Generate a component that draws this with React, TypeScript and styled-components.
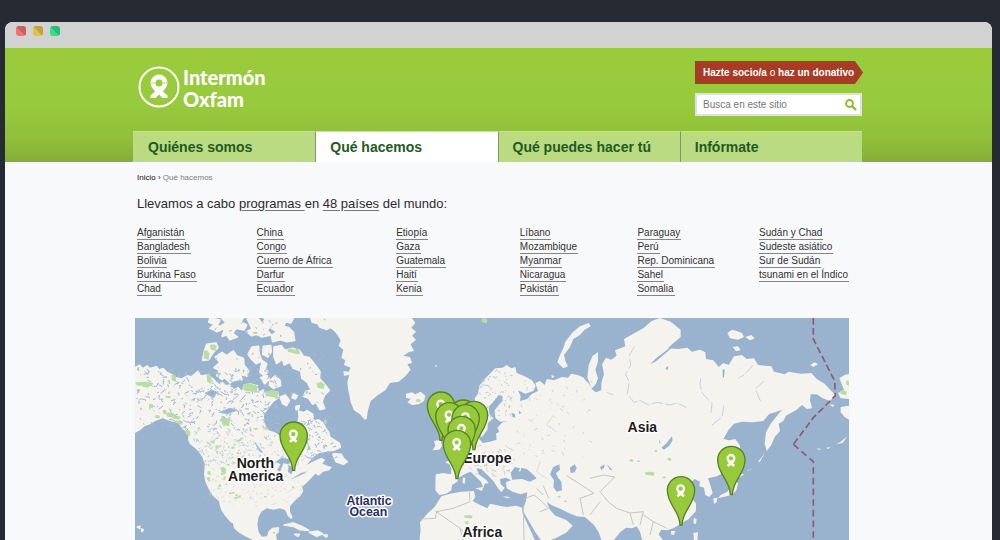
import React from 'react';
import styled, { createGlobalStyle } from 'styled-components';

const GlobalStyle = createGlobalStyle`
  * { box-sizing: border-box; }
  body {
    margin: 0;
    background: #252a33;
    font-family: 'Liberation Sans', Arial, sans-serif;
    color: #333;
  }
`;

const Page = styled.div`
  height: 100vh;
  overflow: hidden;
  padding: 22px 8px 0 5px;
`;

const BrowserWindow = styled.div`
  min-height: 100%;
  background: #f8f9fb;
  border-radius: 8px 8px 0 0;
  overflow: hidden;
`;

const TitleBar = styled.div`
  display: flex;
  gap: 7px;
  height: 26px;
  padding: 4px 11px;
  background: #d2d2d2;
`;

const WindowDot = styled.span<{ $light: string; $dark: string }>`
  width: 10px;
  height: 10px;
  border-radius: 3px;
  background: linear-gradient(45deg, ${(p) => p.$light} 50%, ${(p) => p.$dark} 50%);
`;

const Header = styled.header`
  background: linear-gradient(#99cb3d 0%, #98ca3d 50%, #90bf3a 80%, #84ae36 100%);
`;

const Container = styled.div`
  max-width: 731px;
  margin: 0 auto;
`;

const Masthead = styled.div`
  display: flex;
  justify-content: space-between;
  height: 83px;
  padding: 13px 1px 0 0;
`;

const Logo = styled.a`
  display: flex;
  gap: 3px;
  height: 50px;
  padding: 5px 0 0 5px;
  color: #fff;
  text-decoration: none;
`;

const LogoText = styled.span`
  font: 900 20px/22px Lato, sans-serif;
`;

const Tools = styled.div`
  display: flex;
  flex-direction: column;
  gap: 9px;
  width: 168px;
`;

const DonateButton = styled.button`
  height: 23px;
  padding: 0 8px;
  border: 0;
  background: #a63c26;
  clip-path: polygon(0 0, 160px 0, 100% 50%, 160px 100%, 0 100%);
  color: #fff;
  font: bold 10px 'Liberation Sans', Arial, sans-serif;
  text-align: left;
  white-space: nowrap;
`;

const Or = styled.span`
  font-weight: normal;
`;

const SearchForm = styled.form`
  display: flex;
  align-items: center;
  height: 23px;
  margin-right: 1px;
  border: 2px solid #dedfe8;
  background: #fff;
`;

const SearchInput = styled.input`
  flex: 1;
  min-width: 0;
  padding: 0 6px;
  border: 0;
  outline: 0;
  background: none;
  font: 10px 'Liberation Sans', Arial, sans-serif;
  &::placeholder { color: #777; opacity: 1; }
`;

const SearchButton = styled.button`
  display: flex;
  padding: 0 3px;
  border: 0;
  background: none;
`;

const Nav = styled.nav`
  display: grid;
  grid-template-columns: repeat(4, 1fr);
  height: 31px;
  margin-right: 2px;
`;

const Tab = styled.a<{ $active?: boolean }>`
  padding-left: 15px;
  background: ${(p) => (p.$active ? '#fff' : '#bbdb83')};
  border-top: 1px solid #c8e298;
  color: #1f5a1e;
  font-size: 14px;
  font-weight: bold;
  line-height: 30px;
  text-decoration: none;
  &:not(:first-child) {
    padding-left: 14px;
    border-left: 1px solid #7d9a62;
  }
`;

const Main = styled.main`
  padding: 11px 15px 0 2px;
`;

const Breadcrumb = styled.nav`
  padding-left: 2px;
  color: #808080;
  font-size: 8px;
  line-height: 10px;
`;

const HomeLink = styled.a`
  color: #111;
  text-decoration: none;
`;

const Separator = styled.span`
  color: #111;
`;

const Intro = styled.h1`
  margin: 13px 0 15px;
  padding-left: 2px;
  color: #2b2b2b;
  font-size: 13px;
  font-weight: normal;
  line-height: 16px;
`;

const InlineLink = styled.a`
  color: inherit;
  text-decoration: underline;
  text-decoration-color: #777;
  text-underline-offset: 2px;
  white-space: pre;
`;

const Countries = styled.div`
  display: grid;
  grid-template-columns: 120fr 140fr 124fr 118fr 122fr 88fr;
  padding-left: 2px;
`;

const CountryList = styled.ul`
  margin: 0;
  padding: 0;
  list-style: none;
`;

const CountryItem = styled.li`
  display: flex;
  height: 14px;
`;

const CountryLink = styled.a`
  height: 13px;
  padding-right: 1px;
  border-bottom: 1px solid #858585;
  color: #333;
  font-size: 10px;
  line-height: 12px;
  text-decoration: none;
  white-space: nowrap;
`;

const MapPanel = styled.section`
  margin-top: 21px;
`;

const MapSvg = styled.svg`
  display: block;
  width: 100%;
  background: #99b3cf;
`;

const Label = styled.text<{ $sea?: boolean }>`
  font: bold ${(p) => (p.$sea ? 37 : 42)}px 'Liberation Sans', Arial, sans-serif;
  text-anchor: middle;
  fill: ${(p) => (p.$sea ? '#2a2f62' : '#1c1c1c')};
  stroke: #fff;
  stroke-width: 9px;
  stroke-linejoin: round;
  paint-order: stroke;
`;

const tabs = ['Quiénes somos', 'Qué hacemos', 'Qué puedes hacer tú', 'Infórmate'];

const countries = [
  ['Afganistán', 'Bangladesh', 'Bolivia', 'Burkina Faso', 'Chad'],
  ['China', 'Congo', 'Cuerno de África', 'Darfur', 'Ecuador'],
  ['Etiopía', 'Gaza', 'Guatemala', 'Haití', 'Kenia'],
  ['Líbano', 'Mozambique', 'Myanmar', 'Nicaragua', 'Pakistán'],
  ['Paraguay', 'Perú', 'Rep. Dominicana', 'Sahel', 'Somalia'],
  ['Sudán y Chad', 'Sudeste asiático', 'Sur de Sudán', 'tsunami en el Índico'],
];

const northAmerica =
  'M0 165L15 155 30 148 38 158 52 150 60 158 80 152 88 162 100 158 112 170 125 176 138 186 155 190 170 180 185 182 205 165 212 180 235 178 250 190 265 205 278 200 288 210 300 208 312 222 325 215 336 228 340 208 362 205 384 210 386 230 400 222 410 234 425 226 445 230 448 248 430 262 417 278 402 300 403 322 414 345 435 352 455 366 470 400 480 420 498 400 510 370 508 345 500 328 505 306 503 285 520 290 532 284 550 296 553 316 566 312 580 322 590 340 598 350 602 365 616 374 630 383 634 398 612 408 590 410 568 414 548 428 530 450 552 438 574 428 586 434 577 446 592 452 606 456 598 466 580 470 566 482 556 476 545 488 532 502 516 516 520 528 512 542 496 556 480 574 480 590 488 606 483 613 473 602 466 586 450 580 430 584 410 580 394 590 386 606 382 628 386 652 396 665 411 664 416 648 427 638 448 636 446 652 438 660 442 680 380 680 345 664 325 652 312 640 308 622 296 604 280 580 266 558 248 542 236 522 226 500 222 478 224 450 218 428 206 410 196 400 180 388 174 374 176 358 158 342 144 324 120 318 98 310 76 318 60 328 44 334 30 346 0 362Z';

const arcticIslands = [
  'M240 9L270 15 262 30 278 42 262 50 240 40 252 28 236 22Z',
  'M275 9L340 9 332 20 350 30 342 45 318 40 308 55 322 66 300 74 290 60 276 64 283 45 270 34 288 24Z',
  'M352 12L384 9 395 25 408 12 425 30 412 45 424 60 396 66 380 58 364 62 350 50 366 42Z',
  'M402 9L490 9 482 24 468 20 460 34 476 38 490 52 494 76 470 80 452 74 428 80 424 62 440 50 424 40 436 26 412 22Z',
  'M230 88L258 84 264 98 250 112 236 134 218 136 222 112Z',
  'M256 126L276 112 290 122 310 108 320 122 340 130 342 150 356 168 350 184 332 178 336 194 312 196 300 204 284 188 276 194 260 182 268 166 252 158 270 142Z',
  'M366 96L386 94 388 118 396 138 378 146 364 132 354 118Z',
  'M400 94L422 92 424 110 414 126 398 118Z',
  'M396 136L410 146 406 160 414 170 402 182 390 172Z',
  'M392 188L412 182 420 196 404 206Z',
  'M420 196L436 182 450 196 452 212 430 220 418 210Z',
  'M432 96L454 92 464 106 486 100 508 106 520 124 538 128 556 150 570 170 568 190 584 208 598 226 584 240 576 260 584 280 570 284 558 262 548 268 536 250 520 244 528 228 544 226 532 202 516 190 512 168 490 160 480 142 462 150 458 132 440 146 432 126Z',
  'M450 246L466 240 478 256 470 272 458 266Z',
  'M490 236L502 242 496 252 486 248Z',
  'M498 274L508 272 506 282 498 284Z',
  'M608 416L634 418 640 430 652 440 640 448 618 440Z',
  'M270 564L286 576 300 604 314 624 304 620 288 602 276 584Z',
  'M462 630L490 624 514 634 536 646 510 644 490 634Z',
  'M538 652L562 648 578 656 560 664Z',
  'M494 658L508 658 504 664Z',
  'M580 660L592 660 590 666Z',
  'M22 636L30 634 28 640ZM34 642L40 644 36 650Z',
];

const greenland =
  'M540 9L545 24 562 28 568 38 590 46 602 40 618 54 632 76 626 92 640 104 634 128 646 136 642 150 662 158 656 170 640 168 642 182 658 180 652 200 654 222 658 240 662 262 672 286 690 298 704 314 710 312 714 286 722 258 744 240 766 226 780 204 806 200 826 184 842 164 832 148 846 144 840 126 820 122 836 112 852 108 842 88 858 74 846 62 858 50 844 38 856 24 846 9Z';

const eurasia =
  'M257 478L280 474 303 478 304 462 300 450 286 442 302 434 320 418 344 400 366 392 376 380 374 362 386 358 388 372 398 384 420 380 440 374 438 356 448 350 442 338 458 322 474 318 450 320 436 308 434 286 446 270 458 258 456 242 446 240 434 256 416 276 418 296 430 310 414 324 412 344 396 366 386 362 376 336 372 300 376 270 374 250 384 236 388 212 406 190 422 174 436 160 458 158 470 150 484 160 496 156 500 174 524 184 546 196 557 212 550 228 526 236 504 226 512 244 510 258 532 252 544 238 564 228 556 204 570 198 584 210 590 192 612 196 636 186 654 188 664 176 682 180 698 186 718 208 726 222 712 188 716 150 728 122 744 112 744 140 736 164 744 190 738 206 724 222 738 232 754 226 754 204 762 178 756 148 768 128 784 134 800 122 795 106 826 94 822 72 850 56 880 40 905 18 930 9 962 20 992 44 992 66 966 88 954 100 984 102 1012 98 1026 110 1050 104 1066 112 1068 132 1090 136 1106 156 1120 144 1136 150 1152 124 1176 120 1190 132 1212 130 1224 150 1264 154 1272 170 1304 178 1316 170 1352 176 1384 174 1400 192 1424 206 1440 224 1456 240 1440 258 1418 250 1400 238 1382 238 1380 256 1386 280 1370 282 1356 270 1340 284 1308 302 1300 318 1286 326 1290 348 1274 366 1264 390 1250 408 1244 386 1248 352 1262 326 1278 306 1296 284 1276 292 1258 296 1240 318 1208 322 1176 320 1152 326 1136 344 1120 372 1138 376 1156 372 1170 392 1170 420 1150 446 1124 472 1100 484 1074 490 1082 514 1088 534 1078 546 1066 540 1062 518 1048 514 1050 500 1034 492 1020 504 1034 514 1028 528 1022 544 1038 566 1038 588 1016 612 990 628 970 640 950 646 934 644 926 658 942 680 878 680 870 650 860 634 846 640 828 638 812 650 794 672 786 680 756 680 746 652 732 630 712 612 704 606 680 604 656 594 632 582 604 570 590 560 600 584 616 602 636 610 650 616 668 632 650 652 620 668 590 680 576 680 556 652 540 624 526 600 518 584 528 558 532 532 512 538 488 530 470 520 468 502 486 494 516 492 540 500 560 490 545 475 530 462 514 458 510 478 494 482 484 496 468 488 450 492 452 508 464 518 454 532 444 520 430 498 416 484 394 462 380 460 386 478 408 494 416 504 404 506 400 520 394 502 378 486 362 470 346 476 326 488 322 500 306 510 304 526 288 536 268 540 256 526Z';

const africa =
  'M274 544L300 536 334 530 372 528 376 546 368 558 386 568 412 580 420 566 448 572 470 576 500 572 516 578 518 596 534 630 548 660 556 680 208 680 212 644 210 622 234 594 254 576Z';

const europeIslands = [
  'M168 236L186 232 196 238 212 230 226 242 222 258 206 268 186 270 172 262 182 252 168 248Z',
  'M286 356L302 350 306 374 320 392 328 410 314 420 288 424 298 410 286 398 296 380Z',
  'M252 378L272 374 276 392 268 404 248 406 256 392Z',
  'M338 488L346 488 344 506 338 504Z',
  'M376 520L400 516 396 528Z',
  'M458 544L482 546 470 550Z',
  'M716 24L722 34 704 44 690 60 670 72 660 96 642 120 646 138 654 154 640 160 622 142 630 120 640 100 646 80 668 52 690 34Z',
  'M604 180L614 184 606 190Z',
  'M254 152L262 150 258 156Z',
];

const asiaIslands = [
  'M412 54L426 44 440 48 456 54 462 66 444 74 420 70Z',
  'M466 66L484 60 494 70 480 76Z',
  'M428 96L444 94 452 106 438 108Z',
  'M660 150L674 142 684 148 670 156Z',
  'M394 384L404 378 410 392 424 402 430 390 444 394 440 408 410 410Z',
  'M430 482L448 474 462 478 448 488 434 492Z',
  'M436 492L444 506 438 528 424 540 400 546 384 550 392 540 412 530 426 510Z',
  'M370 550L382 548 380 562 372 566Z',
  'M312 608L320 612 318 628 310 624Z',
  'M244 648L256 648 252 660 242 658Z',
  'M310 654L324 652 322 680 312 680Z',
  'M748 190L764 180 780 176 780 252 752 250 744 234 762 224Z',
  'M752 276L780 272 780 316 764 306 752 292Z',
  'M718 268L734 270 728 276Z',
  'M738 388L752 380 772 364 758 384Z',
  'M680 400L696 402 686 404ZM708 398L722 396 714 402Z',
  'M504 440L514 428 526 410 510 440ZM470 468L490 458 478 466Z',
];

const europeWaters = [
  'M482 474L494 456 510 460 506 470 522 466 540 474 558 490 540 496 512 490 486 492Z',
  'M610 456L628 448 630 464 618 474 624 488 634 500 636 526 620 530 610 516 612 496 600 478Z',
  'M660 458L674 448 680 458 674 472 662 474Z',
  'M484 294L494 296 496 308 488 306ZM506 286L514 294 508 298Z',
];

const asiaWaters = [
  'M214 398L228 386 246 364 248 376 238 392 222 404Z',
  'M180 148L200 128 222 112 250 90 246 98 218 122 196 140Z',
  'M30 456L44 448 42 458 34 466ZM50 446L68 466 60 464Z',
  'M208 372L212 386 208 384Z',
  'M398 162L404 164 402 188 398 186Z',
  'M226 160L236 152 232 166Z',
];

const greens: Array<[number, number, number, number]> = [
  [15, 200, 55, 14], [36, 206, 22, 12], [124, 178, 14, 22], [230, 178, 15, 28], [338, 206, 46, 26],
  [410, 226, 36, 22], [220, 106, 18, 30], [240, 88, 20, 20], [472, 100, 20, 14], [488, 104, 22, 14],
  [274, 308, 26, 26], [56, 266, 14, 14], [106, 242, 16, 8], [74, 300, 16, 10], [98, 284, 12, 14],
  [108, 292, 26, 16], [128, 302, 22, 12], [142, 316, 14, 14], [166, 346, 16, 16], [560, 202, 24, 20],
  [526, 226, 8, 12], [582, 314, 8, 14], [370, 338, 14, 6], [404, 334, 8, 10], [232, 468, 10, 12],
  [272, 456, 16, 20], [244, 378, 10, 8], [256, 390, 8, 12], [230, 486, 10, 10], [266, 508, 8, 8],
  [296, 532, 10, 6], [312, 546, 10, 6], [402, 542, 8, 6], [428, 650, 8, 6], [486, 514, 6, 6],
  [368, 50, 14, 7], [858, 252, 14, 10], [1002, 600, 26, 10], [1004, 618, 12, 10], [1282, 542, 10, 6],
  [1302, 556, 8, 6], [1544, 470, 30, 12], [1574, 404, 8, 8], [1612, 428, 12, 10], [1498, 432, 12, 8],
  [1520, 436, 10, 5], [1596, 484, 12, 6], [2130, 226, 20, 14], [2148, 196, 10, 16], [1054, 9, 18, 16],
];

/** Small seeded generator, so that the lakes are the same on every render. */
function scatter(count: number, seed: number, x: number, y: number, w: number, h: number, size: number) {
  let state = seed;
  const next = () => {
    state = (state * 16807) % 2147483647;
    return state / 2147483647;
  };
  let path = '';
  for (let i = 0; i < count; i++) {
    const px = x + next() * w;
    const py = y + next() * h;
    const dx = (next() - 0.3) * size;
    const dy = (next() - 0.6) * size;
    path += `M${px.toFixed(0)} ${py.toFixed(0)}l${dx.toFixed(0)} ${dy.toFixed(0)} ${(dy / 2).toFixed(0)} ${(dx / 3).toFixed(0)}`;
  }
  return path;
}

const arcticLakes = scatter(330, 71, 20, 165, 420, 180, 18);
const canadaLakes = scatter(170, 913, 190, 340, 280, 110, 13);
const quebecLakes = scatter(120, 37, 505, 300, 110, 130, 14);
const islandLakes = scatter(80, 55, 225, 15, 360, 250, 12);
const plainsRivers = scatter(190, 403, 225, 400, 300, 170, 14);
const parks = scatter(46, 801, 225, 375, 110, 180, 7);
const nordicLakes = scatter(75, 129, 385, 165, 110, 150, 12);
const russianRivers = scatter(55, 29, 500, 200, 220, 230, 15);
const europeBorders = scatter(56, 811, 355, 395, 130, 90, 18);

const pins: Array<[number, number]> = [
  [491, 362], [1000, 296], [933, 272], [1032, 300], [958, 304], [1007, 310], [995, 345], [981, 387],
  [1804, 435], [1653, 526],
];

const Pin = ({ x, y }: { x: number; y: number }) => (
  <g transform={`translate(${x} ${y})`}>
    <path
      d="M-3 104C-3 62-41 43-41 0A41 41 0 0 1 41 0C41 43 3 62 3 104Z"
      fill="#97c93b"
      stroke="#57822a"
      strokeWidth="4"
    />
    <circle cx="-1" cy="-5" r="10" fill="none" stroke="#fff" strokeWidth="7" />
    <path d="M-9 3L9 18M7 3L-11 18" stroke="#fff" strokeWidth="8" fill="none" />
  </g>
);

const WorldMap = () => (
  <MapSvg viewBox="15 9 2142 666" role="img" aria-label="Mapa de programas en el mundo">
    <g fill="#f4f3ee">
      <path d={northAmerica} />
      <g stroke="#f4f3ee" strokeWidth="5" strokeLinejoin="round">
        {arcticIslands.map((d) => <path key={d} d={d} />)}
      </g>
      <path d={greenland} />
      <g transform="translate(660 0)">
        <path d={eurasia} />
        <path d={africa} />
        {europeIslands.map((d) => <path key={d} d={d} />)}
      </g>
      <g transform="translate(1380 0)">
        {asiaIslands.map((d) => <path key={d} d={d} />)}
      </g>
    </g>

    <g fill="none" stroke="#a6bcd4">
      <path d={arcticLakes} strokeWidth="3" />
      <path d={canadaLakes} strokeWidth="2" />
      <path d={quebecLakes} strokeWidth="3" />
      <path d={islandLakes} strokeWidth="3" />
      <path d={plainsRivers} strokeWidth="1" stroke="#b9c6d6" />
      <path d="M225 235L245 225 262 232 248 246ZM268 292L300 280 322 286 290 296ZM376 384L390 410 398 412M305 258L326 240" fill="#99b3cf" strokeWidth="3" />
      <path d="M438 440L455 428 484 434 476 448 460 444 450 470 442 466 452 448ZM476 450L492 458 484 478 474 470ZM484 492L514 474 530 470 508 482Z" fill="#99b3cf" />
      <g transform="translate(660 0)">
        <path d={nordicLakes} strokeWidth="2" />
        <path d={russianRivers} strokeWidth="2" stroke="#bccbdb" />
        <path d="M592 492L560 470 570 440M610 300L590 330 620 350" strokeWidth="2" stroke="#c9d2dc" />
      </g>
    </g>

    <g fill="#99b3cf">
      <g transform="translate(660 0)">{europeWaters.map((d) => <path key={d} d={d} />)}</g>
      <g transform="translate(1380 0)">
        {asiaWaters.map((d) => <path key={d} d={d} />)}
        <g fill="none" stroke="#c6d2de" strokeWidth="3" strokeDasharray="34 7">
          <path d="M134 94L118 120 122 150 106 178 118 200 112 236 132 262 150 256 176 270 200 262 240 270 262 264 290 278M332 190L330 210 338 236 366 266 362 300M402 270L396 306 366 330M522 198L496 222 514 264M490 150L462 180 444 190M50 232L70 240" />
        </g>
      </g>
    </g>

    <path d={parks} fill="none" stroke="#b9dca5" strokeWidth="6" />
    <g fill="#b9dca5">
      {greens.map(([x, y, w, h]) => (
        <path key={`${x}-${y}`} d={`M${x} ${y + 2}L${x + w * 0.6} ${y} ${x + w} ${y + h * 0.3} ${x + w * 0.9} ${y + h} ${x + w * 0.1} ${y + h * 0.8}Z`} />
      ))}
    </g>

    <g fill="none" stroke="#c4c4c2" strokeWidth="3">
      <path d={europeBorders} transform="translate(660 0)" strokeWidth="2" />
      <path d="M1018 532L1020 560 970 580 920 590M916 588L990 640 1010 660M920 588L916 610 870 612M1180 578L1182 675M990 640L1000 675" />
      <path d="M1186 550L1212 540 1236 560 1256 580 1230 590M1240 512L1256 550M1310 482L1370 520 1392 535 1350 550 1360 600M1220 520L1240 540" />
      <path d="M1380 490L1420 480 1454 486 1430 510 1410 530 1434 560 1460 580 1500 594 1540 590 1530 630M1410 560L1380 600M1500 594L1510 630M1540 600L1570 620 1560 660M1570 620L1610 640" />
    </g>

    <g fill="none" stroke="#8d5a6b" strokeWidth="5">
      <path d="M2050 9L2050 72 2114 198 2116 242 2050 308 1990 388" strokeDasharray="20 10" />
      <path d="M1990 388L2050 440 2050 675" strokeDasharray="20 12" />
    </g>

    <Label x="376" y="460">North</Label>
    <Label x="377" y="499">America</Label>
    <Label $sea x="717" y="569">Atlantic</Label>
    <Label $sea x="715" y="603">Ocean</Label>
    <Label x="1072" y="445">Europe</Label>
    <Label x="1057" y="666">Africa</Label>
    <Label x="1537" y="352">Asia</Label>

    {pins.map(([x, y]) => <Pin key={`${x}-${y}`} x={x} y={y} />)}
  </MapSvg>
);

const LogoMark = () => (
  <svg width="42" height="42" viewBox="0 0 42 42" fill="none" aria-hidden="true">
    <circle cx="21" cy="21" r="19.5" stroke="#fff" strokeWidth="2" />
    <circle cx="21" cy="17" r="6" stroke="#fff" strokeWidth="5" />
    <path d="M15 22H27L25 25.5 29.500 29.500V32H24.500L21 28.500 17.500 32H12.500V29.500L17 25.500Z" fill="#fff" />
    <path d="M12.500 17H17.500M24.500 17H29.500" stroke="#b5d974" />
  </svg>
);

const App = () => (
  <>
    <GlobalStyle />
    <Page>
      <BrowserWindow>
        <TitleBar>
          <WindowDot $light="#ee7470" $dark="#c95f5c" />
          <WindowDot $light="#e5c046" $dark="#c3a33b" />
          <WindowDot $light="#35dc8b" $dark="#2bba75" />
        </TitleBar>
        <Header>
          <Container>
            <Masthead>
              <Logo href="#">
                <LogoMark />
                <LogoText>Intermón<br />Oxfam</LogoText>
              </Logo>
              <Tools>
                <DonateButton type="button">
                  Hazte socio/a <Or>o</Or> haz un donativo
                </DonateButton>
                <SearchForm role="search">
                  <SearchInput type="text" placeholder="Busca en este sitio" aria-label="Busca en este sitio" />
                  <SearchButton type="button" aria-label="Buscar">
                    <svg width="12" height="12" viewBox="0 0 12 12" fill="none" stroke="#86bd22">
                      <circle cx="4.500" cy="4.500" r="3.500" strokeWidth="1.800" />
                      <path d="M7 7L11 11" strokeWidth="2.400" />
                    </svg>
                  </SearchButton>
                </SearchForm>
              </Tools>
            </Masthead>
            <Nav>
              {tabs.map((tab, i) => (
                <Tab key={tab} href="#" $active={i === 1}>{tab}</Tab>
              ))}
            </Nav>
          </Container>
        </Header>
        <Container>
          <Main>
            <Breadcrumb>
              <HomeLink href="#">Inicio</HomeLink> <Separator>›</Separator> Qué hacemos
            </Breadcrumb>
            <Intro>
              Llevamos a cabo <InlineLink href="#">programas </InlineLink>en{' '}
              <InlineLink href="#">48 países</InlineLink> del mundo:
            </Intro>
            <Countries>
              {countries.map((column) => (
                <CountryList key={column[0]}>
                  {column.map((name) => (
                    <CountryItem key={name}>
                      <CountryLink href="#">{name}</CountryLink>
                    </CountryItem>
                  ))}
                </CountryList>
              ))}
            </Countries>
            <MapPanel>
              <WorldMap />
            </MapPanel>
          </Main>
        </Container>
      </BrowserWindow>
    </Page>
  </>
);

export default App;
